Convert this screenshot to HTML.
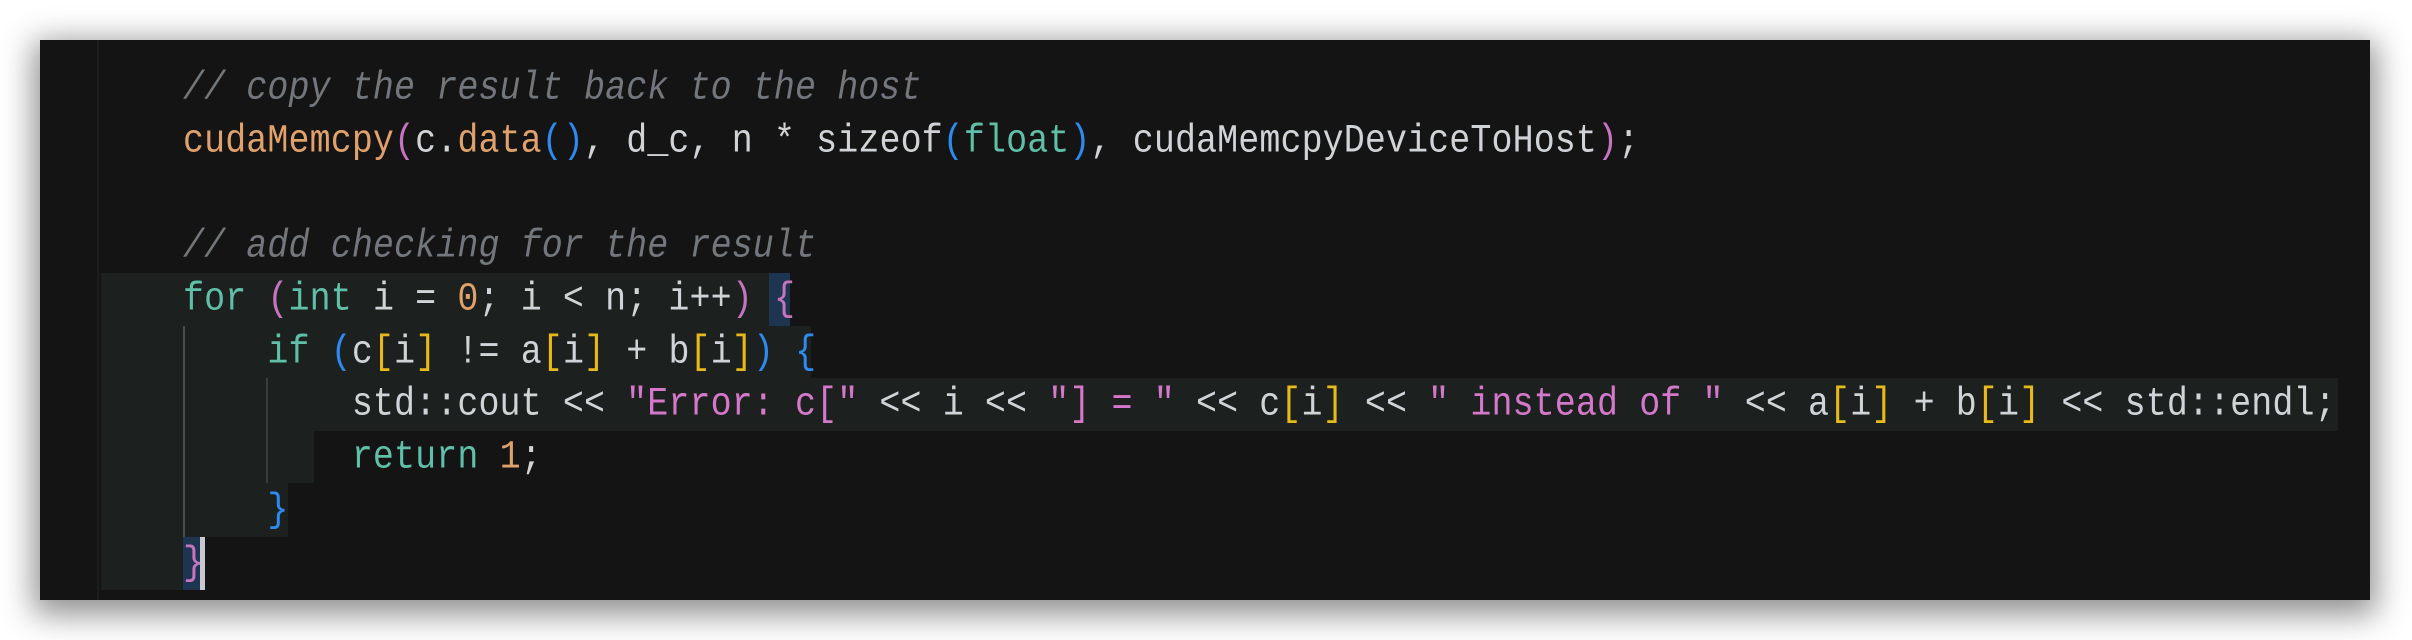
<!DOCTYPE html>
<html><head><meta charset="utf-8"><style>
html,body{margin:0;padding:0;background:#fff;width:2412px;height:640px;overflow:hidden}
.panel{position:absolute;left:40px;top:40px;width:2330px;height:560px;background:#141414;box-shadow:0 8px 30px 6px rgba(0,0,0,0.45)}
.gut{position:absolute;left:97px;top:40px;width:2px;height:560px;background:#1c1e1e}
.hl{position:absolute;background:#1c211f}
.ln{position:absolute;left:183px;height:52.8px;line-height:52.8px;font-family:"Liberation Mono",monospace;font-size:35px;letter-spacing:0.1px;color:#d0d3d8;white-space:pre;transform:scaleY(1.15);transform-origin:0 50%}
.c{color:#72767d;font-style:italic}
.k{color:#5fbfa9}.f{color:#e0a16a}.p{color:#c774c0}.b{color:#2f8af0}.y{color:#e8b919}.s{color:#d578cb}.n{color:#e0a16a}
.guide{position:absolute;width:2px;background:#4a4d4f}
</style></head><body>
<div class="panel"></div>
<div class="gut"></div>
<div class="hl" style="left:101px;top:273px;width:689px;height:53px"></div>
<div class="hl" style="left:101px;top:326px;width:710px;height:52px"></div>
<div class="hl" style="left:101px;top:378px;width:2237px;height:53px"></div>
<div class="hl" style="left:101px;top:431px;width:213px;height:52px"></div>
<div class="hl" style="left:101px;top:483px;width:187px;height:54px"></div>
<div class="hl" style="left:101px;top:537px;width:82px;height:53px"></div>
<div style="position:absolute;left:769px;top:273px;width:21px;height:53px;background:#1d3550"></div>
<div style="position:absolute;left:183px;top:537px;width:17px;height:53px;background:#1d3550"></div>
<div style="position:absolute;left:200px;top:537px;width:5px;height:53px;background:#c8c8d0"></div>
<div class="guide" style="left:183px;top:326px;height:211px"></div>
<div class="guide" style="left:266px;top:378px;height:105px;background:#3a3d3f"></div>
<div class="ln c" style="top:62px">// copy the result back to the host</div>
<div class="ln" style="top:115px"><span class="f">cudaMemcpy</span><span class="p">(</span>c.<span class="f">data</span><span class="b">()</span>, d_c, n * sizeof<span class="b">(</span><span class="k">float</span><span class="b">)</span>, cudaMemcpyDeviceToHost<span class="p">)</span>;</div>
<div class="ln c" style="top:220px">// add checking for the result</div>
<div class="ln" style="top:273px"><span class="k">for</span> <span class="p">(</span><span class="k">int</span> i = <span class="n">0</span>; i &lt; n; i++<span class="p">)</span> <span class="p">{</span></div>
<div class="ln" style="top:326px">    <span class="k">if</span> <span class="b">(</span>c<span class="y">[</span>i<span class="y">]</span> != a<span class="y">[</span>i<span class="y">]</span> + b<span class="y">[</span>i<span class="y">]</span><span class="b">)</span> <span class="b">{</span></div>
<div class="ln" style="top:378px">        std::cout &lt;&lt; <span class="s">"Error: c["</span> &lt;&lt; i &lt;&lt; <span class="s">"] = "</span> &lt;&lt; c<span class="y">[</span>i<span class="y">]</span> &lt;&lt; <span class="s">" instead of "</span> &lt;&lt; a<span class="y">[</span>i<span class="y">]</span> + b<span class="y">[</span>i<span class="y">]</span> &lt;&lt; std::endl;</div>
<div class="ln" style="top:431px">        <span class="k">return</span> <span class="n">1</span>;</div>
<div class="ln" style="top:484px">    <span class="b">}</span></div>
<div class="ln" style="top:537px"><span class="p">}</span></div>
</body></html>
